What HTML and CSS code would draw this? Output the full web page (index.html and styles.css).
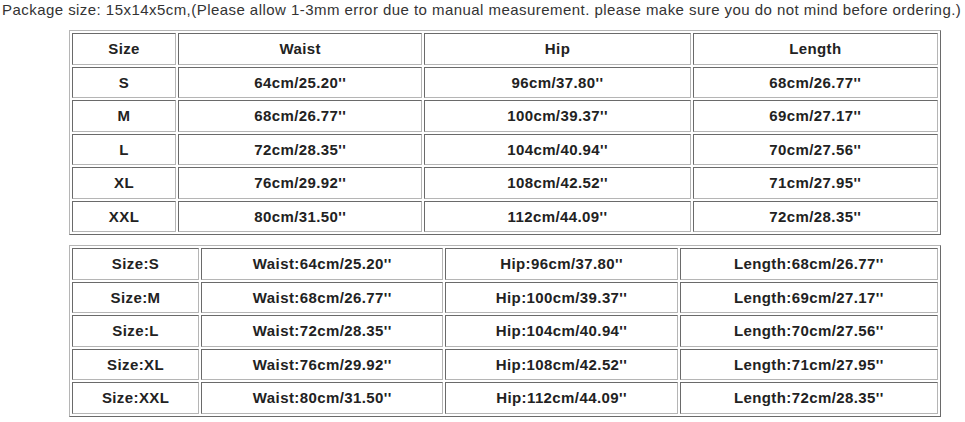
FILE: index.html
```html
<!DOCTYPE html>
<html>
<head>
<meta charset="utf-8">
<link rel="stylesheet" href="styles.css">
</head>
<body>
<p class="note">Package size: 15x14x5cm,(Please allow 1-3mm error due to manual measurement. please make sure you do not mind before ordering.)</p>
<table class="chart chart-a">
<colgroup><col class="a1"><col class="a2"><col class="a3"><col class="a4"></colgroup>
<tr><td>Size</td><td>Waist</td><td>Hip</td><td>Length</td></tr>
<tr><td>S</td><td>64cm/25.20''</td><td>96cm/37.80''</td><td>68cm/26.77''</td></tr>
<tr><td>M</td><td>68cm/26.77''</td><td>100cm/39.37''</td><td>69cm/27.17''</td></tr>
<tr><td>L</td><td>72cm/28.35''</td><td>104cm/40.94''</td><td>70cm/27.56''</td></tr>
<tr><td>XL</td><td>76cm/29.92''</td><td>108cm/42.52''</td><td>71cm/27.95''</td></tr>
<tr><td>XXL</td><td>80cm/31.50''</td><td>112cm/44.09''</td><td>72cm/28.35''</td></tr>
</table>
<table class="chart chart-b">
<colgroup><col class="b1"><col class="b2"><col class="b3"><col class="b4"></colgroup>
<tr><td>Size:S</td><td>Waist:64cm/25.20''</td><td>Hip:96cm/37.80''</td><td>Length:68cm/26.77''</td></tr>
<tr><td>Size:M</td><td>Waist:68cm/26.77''</td><td>Hip:100cm/39.37''</td><td>Length:69cm/27.17''</td></tr>
<tr><td>Size:L</td><td>Waist:72cm/28.35''</td><td>Hip:104cm/40.94''</td><td>Length:70cm/27.56''</td></tr>
<tr><td>Size:XL</td><td>Waist:76cm/29.92''</td><td>Hip:108cm/42.52''</td><td>Length:71cm/27.95''</td></tr>
<tr><td>Size:XXL</td><td>Waist:80cm/31.50''</td><td>Hip:112cm/44.09''</td><td>Length:72cm/28.35''</td></tr>
</table>
</body>
</html>
```

FILE: styles.css
```css
html, body {
  margin: 0;
  padding: 0;
  background: #fff;
}
body {
  font-family: "Liberation Sans", Arial, sans-serif;
  color: #222;
}
.note {
  margin: 0;
  padding-left: 2px;
  height: 20px;
  line-height: 19px;
  font-size: 15px;
  letter-spacing: 0.45px;
  white-space: nowrap;
  color: #333;
}
.chart {
  table-layout: fixed;
  border-collapse: separate;
  border-spacing: 2px;
  border: 1px solid;
  border-color: #b5b5b5 #6a6a6a #6a6a6a #b5b5b5;
  margin-left: 69px;
  width: 872px;
}
.chart-a { margin-top: 10px; }
.chart-b { margin-top: 10px; }
.chart td {
  box-sizing: border-box;
  border: 1px solid;
  border-color: #6a6a6a #b5b5b5 #b5b5b5 #6a6a6a;
  height: 31.5px;
  padding: 0;
  text-align: center;
  font-weight: bold;
  font-size: 15px;
  letter-spacing: 0.4px;
  color: #222;
}
.a1 { width: 104px; }
.a2 { width: 244px; }
.a3 { width: 266px; }
.a4 { width: 245px; }
.b1 { width: 127px; }
.b2 { width: 242px; }
.b3 { width: 232px; }
.b4 { width: 258px; }
```
